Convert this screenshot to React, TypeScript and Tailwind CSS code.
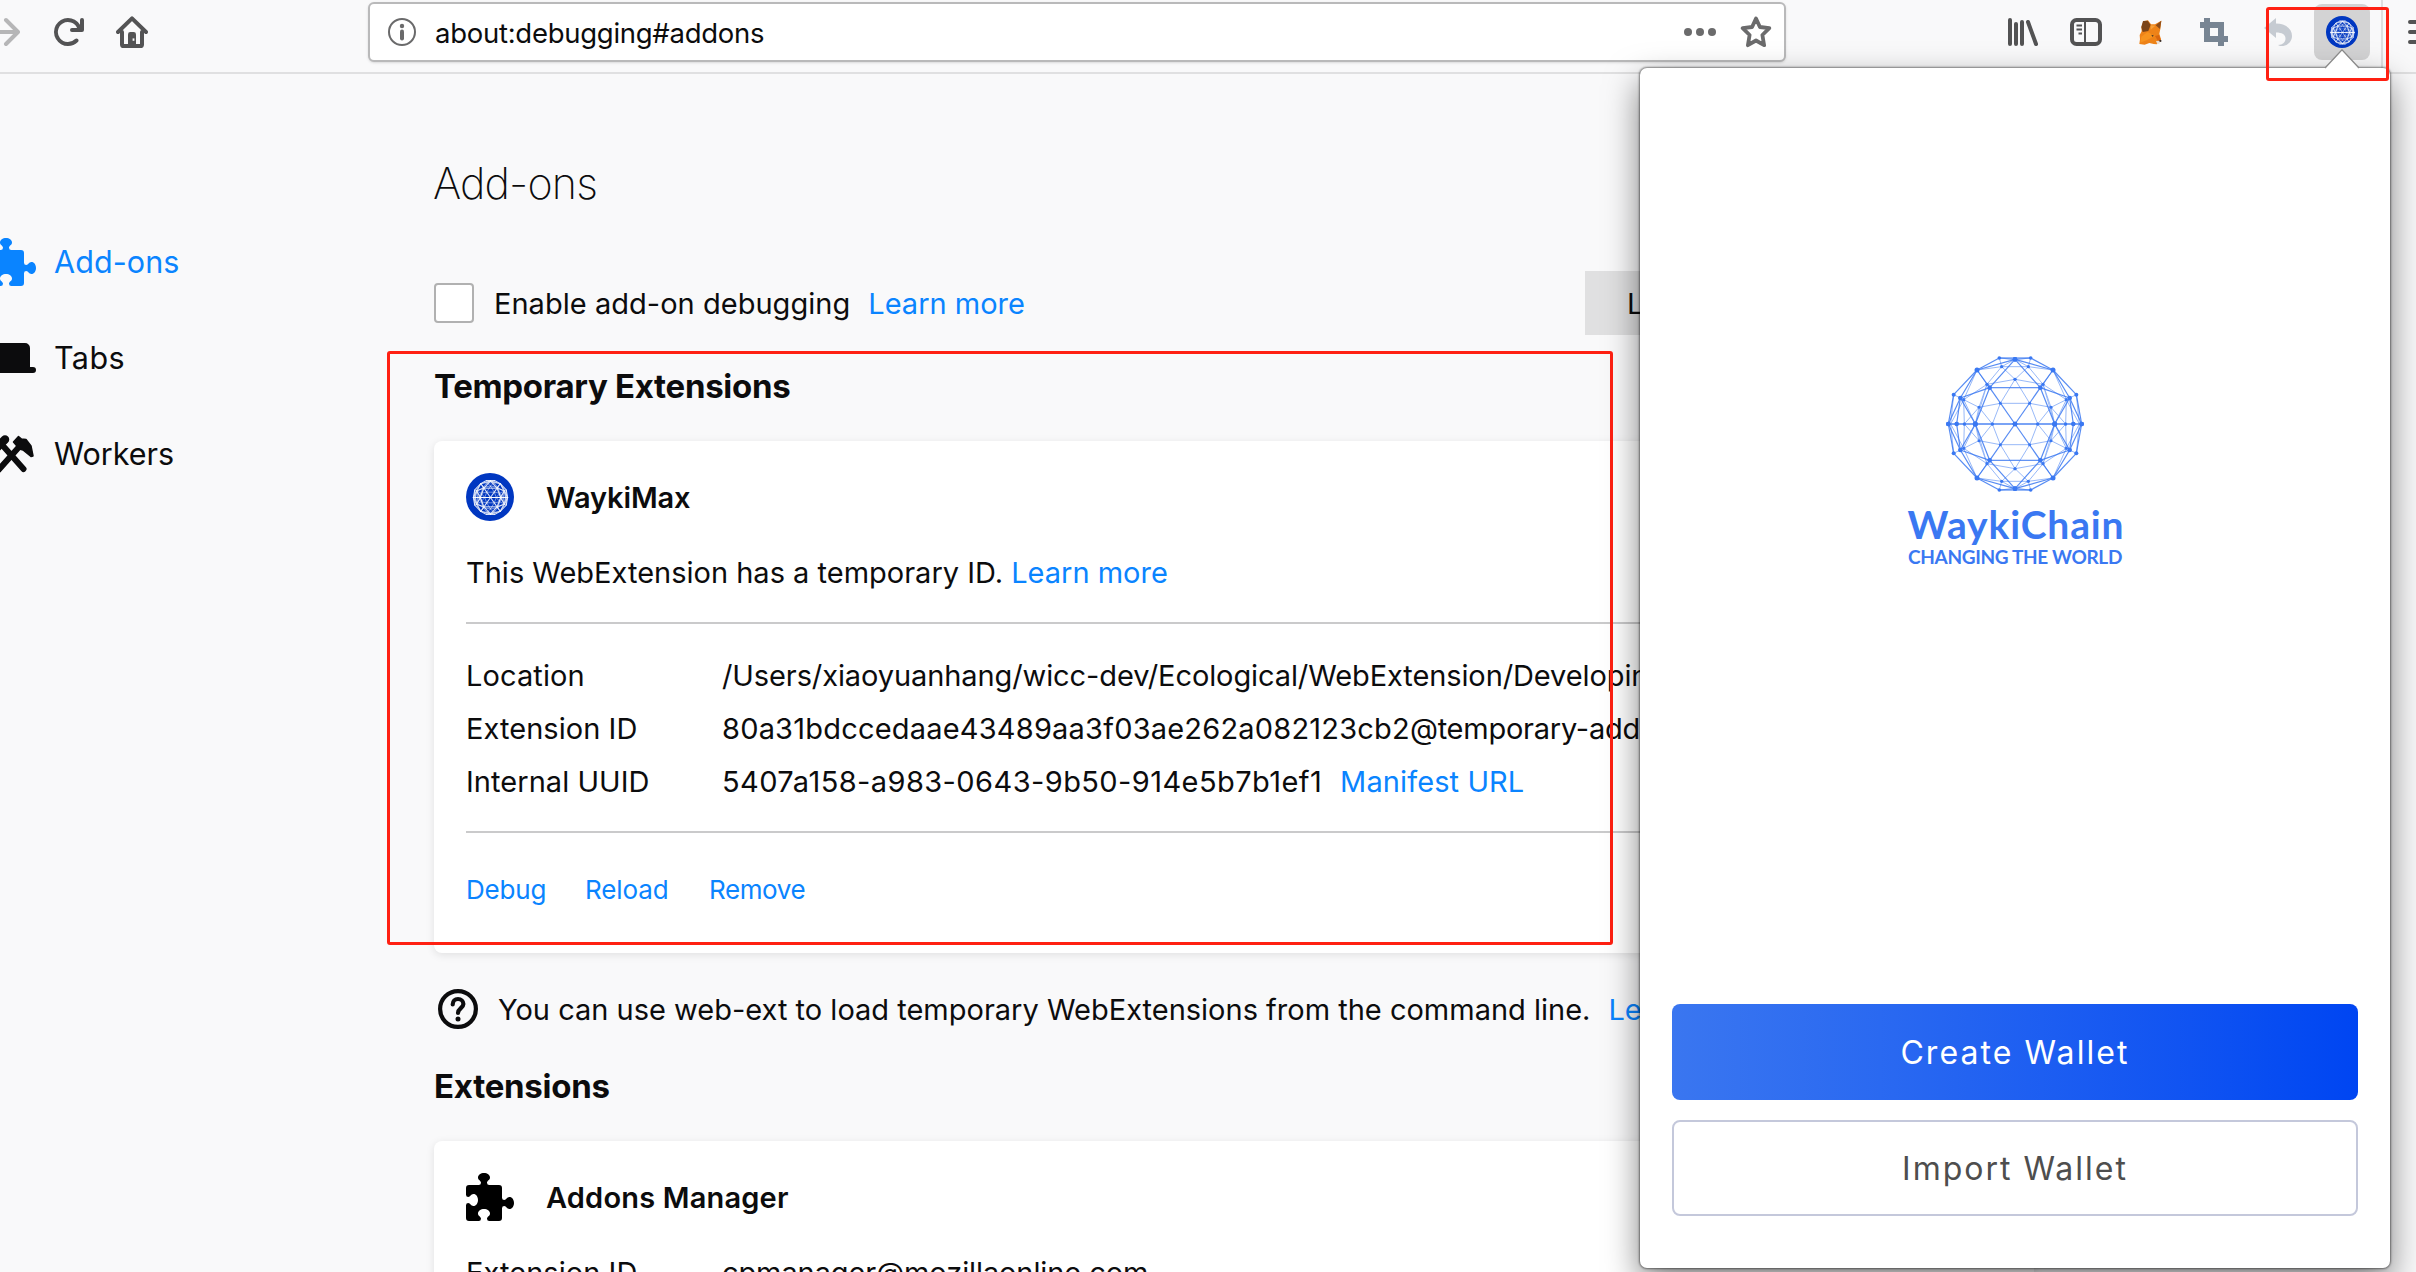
import React from "react";

type Pt = [number, number];
type Edge = [Pt, Pt];

const STRONG: Edge[] = [
  [[0, 0], [76, -109]],
  [[0, -109], [76, -109]],
  [[0, 0], [204, 0]],
  [[76, -109], [119, 0]],
  [[76, -109], [114, -162]],
  [[119, 0], [164, -78]],
  [[76, -109], [0, -194]],
  [[76, -109], [164, -78]],
  [[164, -78], [114, -162]],
  [[164, -78], [175, 0]],
  [[164, -78], [200, 0]],
  [[114, -162], [47, -198]],
  [[114, -162], [184, -88]],
  [[184, -88], [200, 0]],
  [[0, -198], [47, -198]],
  [[114, -162], [0, -194]],
  [[0, -194], [47, -198]],
];

const FAINT: Edge[] = [
  [[0, -62], [44, -62]],
  [[44, -62], [0, -134]],
  [[68, 0], [44, -62]],
  [[68, 0], [108, -50]],
  [[44, -62], [108, -50]],
  [[0, -134], [40, -172]],
  [[0, -134], [84, -119]],
  [[40, -172], [114, -162]],
  [[40, -172], [0, -194]],
  [[40, -172], [47, -198]],
  [[0, -172], [40, -172]],
  [[40, -172], [84, -119]],
  [[84, -119], [154, -73]],
  [[84, -119], [114, -162]],
  [[84, -119], [108, -50]],
  [[84, -119], [119, 0]],
  [[108, -50], [119, 0]],
  [[108, -50], [154, -73]],
  [[154, -73], [119, 0]],
  [[154, -73], [152, 0]],
  [[154, -73], [193, 0]],
  [[154, -73], [114, -162]],
  [[108, -50], [152, 0]],
  [[184, -88], [164, -78]],
  [[184, -88], [193, 0]],
];

const DOTS: [number, number, number][] = [
  [0, 0, 7], [76, -109, 7], [119, 0, 7.5], [114, -162, 7.5], [0, -194, 7], [164, -78, 7],
  [47, -198, 5.5], [184, -88, 6], [200, 0, 7], [175, 0, 6.5],
  [40, -172, 5], [0, -134, 4.5], [84, -119, 5], [154, -73, 5], [44, -62, 4.5], [108, -50, 4.5],
  [152, 0, 4.5], [68, 0, 4.5],
];

const MIRRORS: Pt[] = [[1, 1], [-1, 1], [1, -1], [-1, -1]];

function Globe({ size, className, strong, faint }: { size: number; className?: string; strong: number; faint: number }) {
  return (
    <svg width={size} height={size} viewBox="-216 -216 432 432" className={className} fill="none">
      {MIRRORS.map(([sx, sy]) => (
        <g key={`${sx}${sy}`} transform={`scale(${sx} ${sy})`}>
          <g stroke="currentColor" strokeWidth={faint} opacity={0.6}>
            {FAINT.map(([a, b], i) => (
              <line key={i} x1={a[0]} y1={a[1]} x2={b[0]} y2={b[1]} />
            ))}
          </g>
          <g stroke="currentColor" strokeWidth={strong} opacity={0.85}>
            {STRONG.map(([a, b], i) => (
              <line key={i} x1={a[0]} y1={a[1]} x2={b[0]} y2={b[1]} />
            ))}
          </g>
          {DOTS.map(([x, y, r], i) => (
            <circle key={i} cx={x} cy={y} r={r} fill="currentColor" />
          ))}
        </g>
      ))}
    </svg>
  );
}

function Badge({ large }: { large?: boolean }) {
  return large ? (
    <span className="flex size-12 shrink-0 items-center justify-center rounded-full bg-[#0037c1] text-white">
      <Globe size={37} strong={12} faint={9} />
    </span>
  ) : (
    <span className="flex size-8 shrink-0 items-center justify-center rounded-full bg-[#0037c1] text-white">
      <Globe size={25} strong={13} faint={9} />
    </span>
  );
}

function Puzzle({ className }: { className?: string }) {
  return (
    <svg width="48" height="48" viewBox="0 0 16 16" fill="currentColor" className={className}>
      <path d="M14.5 8c-.971 0-1 1-1.75 1a.765.765 0 0 1-.75-.75V5a1 1 0 0 0-1-1H7.75A.765.765 0 0 1 7 3.25c0-.75 1-.779 1-1.75C8 .635 7.1 0 6 0S4 .635 4 1.5c0 .971 1 1 1 1.75a.765.765 0 0 1-.75.75H1a1 1 0 0 0-1 1v2.25A.765.765 0 0 0 .75 8c.75 0 .779-1 1.75-1C3.365 7 4 7.9 4 9s-.635 2-1.5 2c-.971 0-1-1-1.75-1a.765.765 0 0 0-.75.75V15a1 1 0 0 0 1 1h3.25a.765.765 0 0 0 .75-.75c0-.75-1-.779-1-1.75 0-.865.9-1.5 2-1.5s2 .635 2 1.5c0 .971-1 1-1 1.75a.765.765 0 0 0 .75.75H11a1 1 0 0 0 1-1v-3.25a.765.765 0 0 1 .75-.75c.75 0 .779 1 1.75 1 .865 0 1.5-.9 1.5-2s-.635-2-1.5-2z" />
    </svg>
  );
}

function Toolbar() {
  return (
    <header className="h-[74px] shrink-0 border-b-2 border-[#e0e0e1] bg-[#f9f9fa]">
      <div className="flex h-16 items-center text-[#535354]">
        <svg width="20" height="32" viewBox="0 0 20 32" fill="none" stroke="#b6b6b7" strokeWidth="4" strokeLinecap="round" strokeLinejoin="round" className="shrink-0">
          <path d="M-4 16H17M6 4l12 12L6 28" />
        </svg>
        <svg width="32" height="32" viewBox="0 0 16 16" fill="currentColor" className="ml-8 shrink-0">
          <path d="M15 1a1 1 0 0 0-1 1v2.418A6.995 6.995 0 1 0 8 15a6.954 6.954 0 0 0 4.95-2.05 1 1 0 0 0-1.414-1.414A5.019 5.019 0 1 1 12.549 6H10a1 1 0 0 0 0 2h5a1 1 0 0 0 1-1V2a1 1 0 0 0-1-1z" />
        </svg>
        <svg width="32" height="32" viewBox="0 0 16 16" fill="none" stroke="currentColor" strokeWidth="2" strokeLinecap="round" strokeLinejoin="round" className="ml-8 shrink-0">
          <path d="M1 8l7-6.8L15 8M3 8v6.2a.8.8 0 0 0 .8.8h8.4a.8.8 0 0 0 .8-.8V8" />
          <path d="M6 9.2A1.2 1.2 0 0 1 7.200 8h1.600A1.200 1.200 0 0 1 10 9.200V15H6z" fill="currentColor" stroke="none" />
          <rect x="8.300" y="11.200" width="0.900" height="1.200" fill="#f9f9fa" stroke="none" />
        </svg>
        <div className="ml-[220px] flex h-[60px] w-[1418px] shrink-0 items-center rounded-md border-2 border-[#b9b9ba] bg-white pl-[18px] pr-3 shadow-sm">
          <svg width="28" height="28" viewBox="0 0 28 28" fill="none" className="shrink-0">
            <circle cx="14" cy="14" r="13" stroke="#6a6a6b" strokeWidth="2" />
            <circle cx="14" cy="8" r="2.200" fill="#6a6a6b" />
            <path d="M14 13.500v7" stroke="#6a6a6b" strokeWidth="4" strokeLinecap="round" />
          </svg>
          <span className="ml-[19px] pt-0.5 text-[27.5px] leading-10 tracking-[-0.27px] text-[#0c0c0d]">about:debugging#addons</span>
          <svg width="32" height="32" viewBox="0 0 32 32" fill="#6b6b6c" className="ml-auto shrink-0">
            <circle cx="4" cy="16" r="4" />
            <circle cx="16" cy="16" r="4" />
            <circle cx="28" cy="16" r="4" />
          </svg>
          <svg width="32" height="32" viewBox="0 0 32 32" fill="none" stroke="#6b6b6c" strokeWidth="3.800" strokeLinejoin="round" className="ml-6 shrink-0">
            <path d="M16 2.500l3.900 8.500 9.400 1.200-6.900 6.800 1.700 10.200L16 24.500l-8.100 4.700L9.600 19 2.700 12.200l9.400-1.200z" />
          </svg>
        </div>
        <svg width="32" height="32" viewBox="0 0 32 32" fill="none" stroke="currentColor" strokeWidth="4" strokeLinecap="round" className="ml-[220px] shrink-0">
          <path d="M4 4v24M10 8v20M16 6v22M22 6l8 22" />
        </svg>
        <svg width="32" height="32" viewBox="0 0 32 32" fill="none" stroke="currentColor" className="ml-8 shrink-0">
          <rect x="2" y="4" width="28" height="24" rx="4.500" strokeWidth="4" />
          <path d="M15 5v22M6.500 9.500h5.500M6.500 13.500h5.500M8.500 17.500h3.500" strokeWidth="2" />
        </svg>
        <svg width="32" height="32" viewBox="0 0 96 96" className="ml-8 shrink-0">
          <path d="M22 34l6-18 14-3 9 12 12 0 19-11-3 25-3 14 5 17-3 9-10 6-9-1-13-3-14 5-16-2 2-14-1-13 6-11z" fill="#ee8318" />
          <path d="M27 15l14-1 9 13-7 18-17 3-4-15z" fill="#7b4417" />
          <path d="M82 14l-4 25-13-11z" fill="#8c4c1a" />
          <path d="M50 28l14 1-14 12z" fill="#f6a13a" />
          <path d="M41 48l22 12-24 12-20 8 3-18z" fill="#f7931e" />
          <path d="M63 60l12-3 6 16-9 2z" fill="#d9670f" />
          <path d="M66 75l12-1v8l-8 3z" fill="#e9dfd6" />
          <path d="M76 72h6v5l-5 1zM52 56l8 3-5 3z" fill="#3b2d25" />
        </svg>
        <svg width="32" height="32" viewBox="0 0 32 32" fill="#788593" className="ml-8 shrink-0">
          <path d="M6 2h6v18h18v6h-4v4h-6v-4H6V12H2V6h4zM12 6h14v14h-6v-8h-8z" />
        </svg>
        <svg width="32" height="32" viewBox="0 0 32 32" fill="#c6cbd2" className="ml-8 shrink-0">
          <path d="M2 12L14 2v5.500C24 7.500 30 13 30 20c0 6-5 10-10.500 10-1.500 0-3-.5-3.500-1 5 0 7.500-3 7.500-6.500 0-4-3.500-6-9.500-6V22z" />
        </svg>
        <div className="ml-5 flex size-14 shrink-0 items-center justify-center rounded-lg bg-[#d3d3d4]">
          <Badge />
        </div>
        <div className="ml-[11px] h-17 w-0.5 shrink-0 self-start bg-[#dededf]" />
        <svg width="32" height="32" viewBox="0 0 32 32" stroke="currentColor" strokeWidth="4" strokeLinecap="round" className="ml-[25px] shrink-0">
          <path d="M2 6h28M2 16h28M2 26h28" />
        </svg>
      </div>
    </header>
  );
}

function Sidebar() {
  return (
    <nav className="-ml-3 flex w-[446px] shrink-0 flex-col pt-[140px] text-[30.5px] leading-10 text-[#0c0c0d]">
      <a className="flex h-24 items-center gap-[18px] text-[#0a84ff]">
        <Puzzle />
        <span className="tracking-[0.1px]">Add-ons</span>
      </a>
      <a className="flex h-24 items-center gap-[18px]">
        <svg width="48" height="48" viewBox="0 0 48 48" fill="currentColor">
          <path d="M11 9h26a5 5 0 0 1 5 5v19h3a3 3 0 0 1 0 6H3a3 3 0 0 1 0-6h3V14a5 5 0 0 1 5-5z" />
        </svg>
        <span className="tracking-[0.4px]">Tabs</span>
      </a>
      <a className="flex h-24 items-center gap-[18px]">
        <svg width="48" height="48" viewBox="0 0 48 48" fill="none" stroke="currentColor" strokeWidth="6" strokeLinecap="round">
          <path d="M16 17l19.500 22M31 17L10.500 40" />
          <path d="M17 9.500L8 18.500" strokeWidth="8.500" />
          <path d="M25.500 12l5-5.500 3 2.500 4.500.5 5 6.500 2 10-2 .5-8-6.500-3.500-1z" fill="currentColor" strokeWidth="1.500" strokeLinejoin="round" />
        </svg>
        <span>Workers</span>
      </a>
    </nav>
  );
}

const card = "w-[1600px] rounded-lg bg-white pl-8 pt-8 shadow-[0_2px_8px_rgba(12,12,13,0.1)]";

function Main() {
  return (
    <main className="w-[1600px] shrink-0 whitespace-nowrap text-[29px] leading-10 text-[#0c0c0d]">
      <h1 className="mt-[83px] -ml-px text-[43px] font-extralight leading-[52px] tracking-[-0.85px]">Add-ons</h1>
      <div className="mt-[62px] flex h-16 items-center">
        <span className="size-10 shrink-0 rounded border-2 border-[#b1b1b1] bg-white" />
        <span className="ml-5 pt-0.5 tracking-[0.03px]">Enable add-on debugging</span>
        <a className="ml-[18px] pt-0.5 text-[#0a84ff]">Learn more</a>
        <button className="ml-auto h-16 w-[449px] bg-[#e0e0e1] pl-[42px] pt-0.5 text-left">Load Temporary Add-on</button>
      </div>
      <h2 className="mt-[31px] text-[33px] font-bold tracking-[-0.3px]">Temporary Extensions</h2>
      <section className={`mt-[35px] pb-[43px] ${card}`}>
        <div className="flex items-center gap-8">
          <Badge large />
          <h3 className="pt-0.5 font-semibold tracking-[-0.1px]">WaykiMax</h3>
        </div>
        <p className="mt-8">
          This WebExtension has a temporary ID. <a className="text-[#0a84ff]">Learn more</a>
        </p>
        <dl className="mt-[29px] grid grid-cols-[256px_1fr] border-y-2 border-[#cacacb] pb-[23px] pt-[25px] leading-[53px]">
          <dt className="tracking-[0.1px]">Location</dt>
          <dd className="tracking-[-0.1px]">/Users/xiaoyuanhang/wicc-dev/Ecological/WebExtension/Developing</dd>
          <dt className="tracking-[0.05px]">Extension ID</dt>
          <dd>
            <span className="tracking-[0.2px]">80a31bdccedaae43489aa3f03ae262a082123cb2</span>
            <span className="tracking-[-0.25px]">@temporary-addon</span>
          </dd>
          <dt className="tracking-[0.05px]">Internal UUID</dt>
          <dd>
            <span className="tracking-[0.42px]">5407a158-a983-0643-9b50-914e5b7b1ef1</span>
            <a className="ml-[18px] tracking-[0.1px] text-[#0a84ff]">Manifest URL</a>
          </dd>
        </dl>
        <div className="mt-[37px] flex text-[26px] text-[#0a84ff]">
          <a className="w-[119px] tracking-[-0.2px]">Debug</a>
          <a className="w-[124px] tracking-[-0.1px]">Reload</a>
          <a className="tracking-[-0.4px]">Remove</a>
        </div>
      </section>
      <div className="mt-9 flex items-center pl-1">
        <svg width="40" height="40" viewBox="0 0 40 40" fill="none" stroke="#0c0c0d" strokeWidth="4.200" strokeLinecap="round" className="shrink-0">
          <circle cx="20" cy="20" r="17.900" />
          <path d="M14.700 15.500c0-3.400 2.300-5.500 5.300-5.500s5.400 2.200 5.400 5c0 3.900-5.400 4.500-5.400 9" />
          <circle cx="20" cy="30" r="2.500" fill="#0c0c0d" stroke="none" />
        </svg>
        <span className="-mb-0.5 ml-5">You can use web-ext to load temporary WebExtensions from the command line.</span>
        <a className="-mb-0.5 ml-[18px] text-[#0a84ff]">Learn more</a>
      </div>
      <h2 className="mt-[37px] text-[33px] font-bold tracking-[-0.25px]">Extensions</h2>
      <section className={`mt-[35px] pb-10 ${card}`}>
        <div className="flex items-center gap-8">
          <Puzzle className="text-black" />
          <h3 className="pt-0.5 font-semibold tracking-[0.18px]">Addons Manager</h3>
        </div>
        <dl className="mt-[25px] grid grid-cols-[256px_1fr] leading-[53px]">
          <dt className="tracking-[0.05px]">Extension ID</dt>
          <dd className="tracking-[-0.1px]">cpmanager@mozillaonline.com</dd>
        </dl>
      </section>
    </main>
  );
}

function WalletPopup() {
  return (
    <div className="absolute left-[1640px] top-[68px] flex h-[1200px] w-[750px] flex-col items-center rounded-[7px] bg-white px-8 pb-[52px] pt-[284px] shadow-[0_0_2px_1px_rgba(0,0,0,0.45),0_14px_34px_rgba(0,0,0,0.5)]">
      <svg width="38" height="22" viewBox="0 0 38 22" className="absolute left-[683px] top-[-19px]">
        <path d="M2.500 19L19 1l16.500 18v3h-33z" fill="#fff" />
        <path d="M2 19L19 .8 36 19" fill="none" stroke="#8a8a8a" strokeWidth="1.300" />
      </svg>
      <Globe size={144} className="text-[#3a78f2]" strong={3.6} faint={2.6} />
      <div className="mt-2 whitespace-nowrap pl-0.5 font-[Lato] text-[39px] font-bold leading-10 tracking-[0.85px] text-[#3a78f2]">WaykiChain</div>
      <div className="mt-[3px] whitespace-nowrap font-[Lato] text-[19px] font-bold leading-5 tracking-[-0.33px] text-[#3a78f2]">CHANGING THE WORLD</div>
      <button className="mt-auto h-24 w-full rounded-lg bg-linear-to-r from-[#3a76f0] to-[#0045f2] pt-0.5 text-[32px] tracking-[2.08px] text-white">Create Wallet</button>
      <button className="mt-5 h-24 w-full rounded-lg border-2 border-[#c4c8db] bg-white pt-0.5 text-[32px] tracking-[2px] text-[#4e4e4e]">Import Wallet</button>
    </div>
  );
}

export default function App() {
  return (
    <div className="relative flex h-[1272px] w-[2416px] flex-col overflow-hidden bg-[#f9f9fa] font-['Inter',sans-serif]">
      <Toolbar />
      <div className="flex min-h-0 flex-1">
        <Sidebar />
        <Main />
      </div>
      <div className="pointer-events-none absolute left-[387px] top-[351px] h-[594px] w-[1226px] rounded-[3px] border-[3px] border-[#ff2012]" />
      <WalletPopup />
      <div className="pointer-events-none absolute left-[2266px] top-[7px] h-[74px] w-[123px] rounded-[3px] border-[3px] border-[#ff2012]" />
    </div>
  );
}
